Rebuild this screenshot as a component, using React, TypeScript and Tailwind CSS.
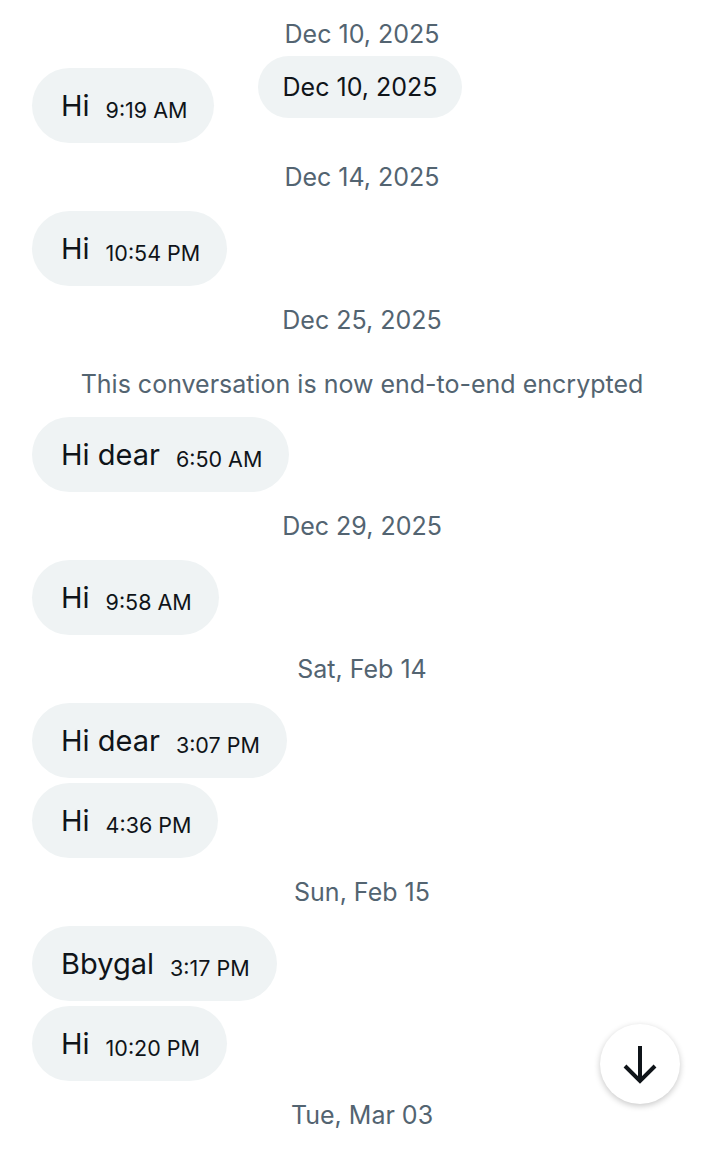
type Item =
  | { kind: "date"; text: string }
  | { kind: "note"; text: string }
  | { kind: "msg"; text: string; time: string; tight?: boolean };

const items: Item[] = [
  { kind: "date", text: "Dec 10, 2025" },
  { kind: "msg", text: "Hi", time: "9:19 AM" },
  { kind: "date", text: "Dec 14, 2025" },
  { kind: "msg", text: "Hi", time: "10:54 PM" },
  { kind: "date", text: "Dec 25, 2025" },
  { kind: "note", text: "This conversation is now end-to-end encrypted" },
  { kind: "msg", text: "Hi dear", time: "6:50 AM" },
  { kind: "date", text: "Dec 29, 2025" },
  { kind: "msg", text: "Hi", time: "9:58 AM" },
  { kind: "date", text: "Sat, Feb 14" },
  { kind: "msg", text: "Hi dear", time: "3:07 PM" },
  { kind: "msg", text: "Hi", time: "4:36 PM", tight: true },
  { kind: "date", text: "Sun, Feb 15" },
  { kind: "msg", text: "Bbygal", time: "3:17 PM" },
  { kind: "msg", text: "Hi", time: "10:20 PM", tight: true },
  { kind: "date", text: "Tue, Mar 03" },
];

function Bubble({ text, time, tight }: { text: string; time: string; tight?: boolean }) {
  return (
    <div className={`flex ${tight ? "mt-[5px]" : ""}`}>
      <div className="flex items-baseline gap-4 h-[75px] rounded-full bg-[#eff3f4] pl-[29px] pr-[27px] pt-[20px]">
        <span className="text-[29px] text-[#0f1419] leading-[36px]">{text}</span>
        <span className="relative top-[2px] text-[21.5px] text-[#0f1419] leading-[28px]">{time}</span>
      </div>
    </div>
  );
}

export default function App() {
  return (
    <div
      className="relative w-[716px] h-[1156px] overflow-hidden bg-white"
      style={{ fontFamily: "Inter, 'Noto Sans', sans-serif" }}
    >
      <div className="flex flex-col pl-8 pr-6">
        {items.map((it, i) => {
          if (it.kind === "date")
            return (
              <div key={i} className="h-[68px] flex items-center justify-center pt-[2px] text-[25px] text-[#536471]">
                {it.text}
              </div>
            );
          if (it.kind === "note")
            return (
              <div key={i} className="h-[63px] flex items-center justify-center pb-[2px] text-[25px] text-[#536471]">
                {it.text}
              </div>
            );
          return <Bubble key={i} text={it.text} time={it.time} tight={it.tight} />;
        })}
      </div>

      <div className="absolute left-[258px] top-[56px] w-[204px] h-[62px] rounded-full bg-[#eff3f4] flex items-center justify-center pt-[2px] text-[25px] text-[#0f1419]">
        Dec 10, 2025
      </div>

      <button className="absolute left-[600px] top-[1024px] w-[80px] h-[80px] rounded-full bg-white flex items-center justify-center shadow-[0_2px_6px_rgba(0,0,0,0.22)]">
        <svg width="40" height="40" viewBox="0 0 40 40" fill="none" stroke="#0f1419" strokeWidth="4">
          <path d="M20 2 V37" />
          <path d="M5 22 L20 37 L35 22" strokeLinejoin="miter" />
        </svg>
      </button>
    </div>
  );
}
